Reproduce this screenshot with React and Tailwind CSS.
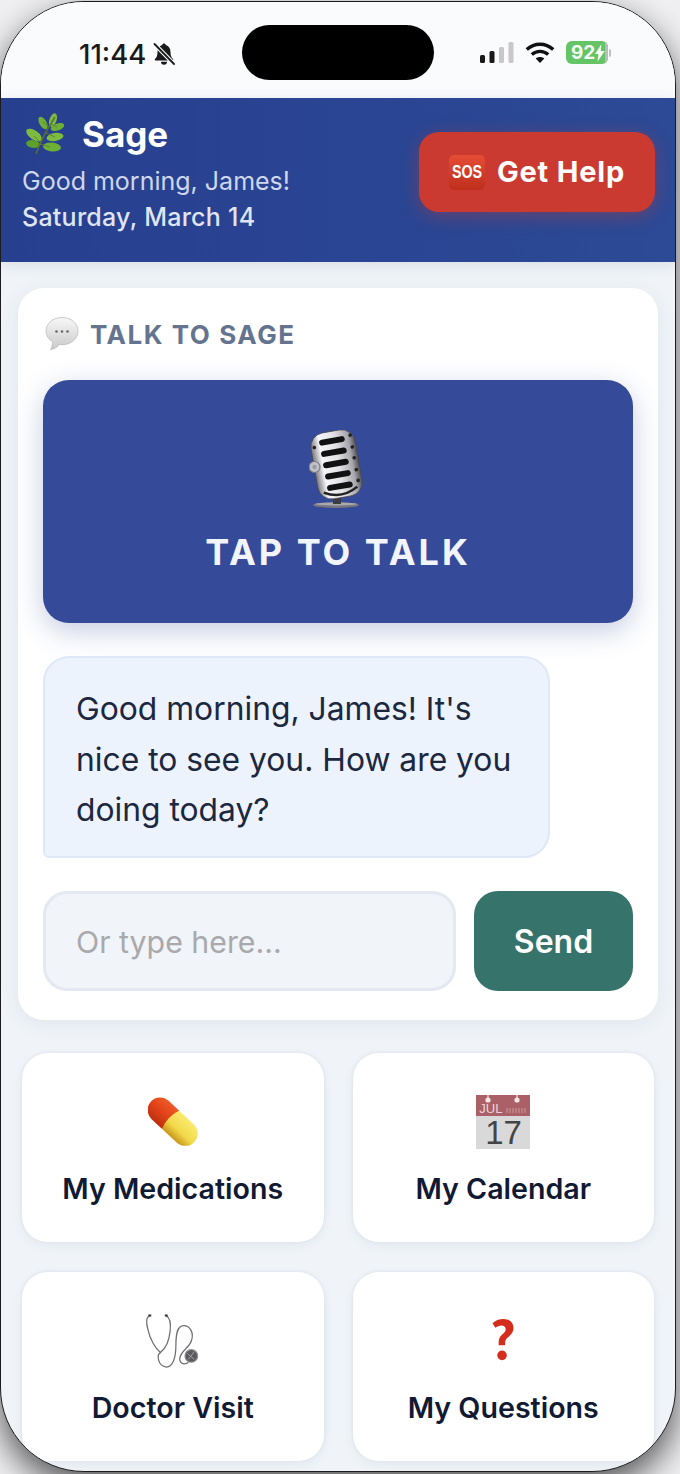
import React from 'react';

function BellSlash() {
  return (
    <svg width="24" height="24" viewBox="0 0 24 24" className="ml-[6px]">
      <path d="M12 1.500c-1 0-1.700.7-1.800 1.600C7.300 3.900 5.500 6.500 5.500 10c0 3.500-.8 5.300-2.500 7-.6.600-.2 1.500.6 1.500h16.800c.8 0 1.200-.9.6-1.500-1.700-1.700-2.500-3.500-2.500-7 0-3.500-1.800-6.100-4.700-6.900-.1-.9-.8-1.600-1.800-1.600z" fill="#1a1a1a" />
      <path d="M9 19.800a3 3 0 0 0 6 0z" fill="#1a1a1a" />
      <path d="M2.500 2 22 22" stroke="#fafbfd" strokeWidth="4" />
      <path d="M2.500 2 22 22" stroke="#1a1a1a" strokeWidth="1.800" strokeLinecap="round" />
    </svg>
  );
}

function Signal() {
  return (
    <svg width="34" height="22" viewBox="0 0 34 22">
      <rect x="0" y="13" width="5" height="8" rx="1.500" fill="#1a1a1a" />
      <rect x="9.500" y="9" width="5" height="12" rx="1.500" fill="#1a1a1a" />
      <rect x="19" y="5" width="5" height="16" rx="1.500" fill="#c8c8ca" />
      <rect x="28.500" y="0" width="5" height="21" rx="1.500" fill="#c8c8ca" />
    </svg>
  );
}

function Wifi() {
  return (
    <svg width="30" height="22" viewBox="0 0 30 22" fill="none" stroke="#111" strokeWidth="3.400">
      <path d="M1.800 7.500C9.500.5 20.500.5 28.200 7.500" />
      <path d="M6.800 12.500c4.800-4.200 11.600-4.200 16.400 0" />
      <path d="M15 21l-4.300-4.500c2.500-2 6.100-2 8.600 0z" fill="#111" stroke="none" />
    </svg>
  );
}

function Battery() {
  return (
    <div className="flex items-center">
      <div className="flex h-[23px] w-[42px] items-center overflow-hidden rounded-[6px] bg-[#65c466]">
        <span className="pl-[5px] text-[19px] leading-none font-bold text-[#f4fbf4]">92</span>
        <svg width="10" height="18" viewBox="0 0 10 18">
          <path d="M6.500 0 0 10h3.500L2.500 18 10 7H6z" fill="#f4fbf4" />
        </svg>
        <div className="ml-auto h-full w-[3px] bg-[#b9bdb9]" />
      </div>
      <div className="ml-[1px] h-[8px] w-[2px] rounded-r-sm bg-[#c0c0c2]" />
    </div>
  );
}

function Leaf() {
  const leaves = [
    [31, 7, -70, 7, 3.500, '#7cbb3f'],
    [35.500, 14, -20, 7, 3.500, '#6db035'],
    [21, 10, 60, 7, 3.500, '#6db035'],
    [33, 24, -10, 8.500, 4, '#7cbb3f'],
    [12, 22, 35, 9, 4.500, '#7cbb3f'],
    [30, 34, 5, 9, 4.500, '#6db035'],
    [11, 31, 8, 7, 3.800, '#5ea02c'],
  ];
  return (
    <svg width="42" height="42" viewBox="0 0 42 42">
      {leaves.map(([x, y, r, rx, ry, c], i) => (
        <ellipse key={i} cx={x} cy={y} rx={rx} ry={ry} fill={c} transform={`rotate(${r} ${x} ${y})`} />
      ))}
      <path d="M14 41C17 32 24 18 33 4" stroke="#5d6f33" strokeWidth="1.400" fill="none" />
      <path d="M19 30l-7-7M18 31l10 3M24 20l9 4M27 14l-6-5M29 11l6 3" stroke="#5d7d33" strokeWidth=".9" fill="none" />
    </svg>
  );
}

function Balloon() {
  return (
    <svg width="34" height="34" viewBox="0 0 34 34" className="ml-[2px]">
      <defs>
        <linearGradient id="balloon" x1="0" y1="0" x2="0" y2="1">
          <stop offset="0" stopColor="#f8f8f8" />
          <stop offset="1" stopColor="#c9c9c9" />
        </linearGradient>
      </defs>
      <path d="M17 .5C8 .5 1 6.500 1 14c0 4.500 2.600 8.400 6.500 10.800.2 2.300-.3 5.300-2 7.700 3.600-.4 7-2.500 9-5 .8.100 1.600.200 2.500.200 9 0 16-6 16-13.700S26 .5 17 .5z" fill="url(#balloon)" stroke="#bdbdbd" strokeWidth=".8" />
      <circle cx="11.500" cy="14.500" r="1.300" fill="#666" />
      <circle cx="17" cy="14.500" r="1.300" fill="#666" />
      <circle cx="22.500" cy="14.500" r="1.300" fill="#666" />
    </svg>
  );
}

function Mic() {
  return (
    <svg width="58" height="82" viewBox="0 0 58 82">
      <defs>
        <linearGradient id="chrome" x1="0" y1="0" x2="1" y2="0">
          <stop offset="0" stopColor="#77777d" />
          <stop offset=".2" stopColor="#f6f6f8" />
          <stop offset=".55" stopColor="#e2e2e6" />
          <stop offset=".85" stopColor="#a6a6ac" />
          <stop offset="1" stopColor="#4c4c52" />
        </linearGradient>
      </defs>
      <ellipse cx="27" cy="75" rx="23" ry="3" fill="#77777d" />
      <ellipse cx="27" cy="74" rx="21" ry="1.500" fill="#a9a9ae" />
      <rect x="24" y="66" width="8" height="8" fill="#3c3c42" />
      <g transform="rotate(-10 27 34)">
        <rect x="5" y="1" width="45" height="67" rx="14" fill="url(#chrome)" stroke="#4a4a50" strokeWidth=".8" />
        {[10.500, 22, 33.500, 45, 56.500].map((y) => (
          <rect key={y} x="14" y={y - 3} width="26" height="6" rx="3" fill="#111" />
        ))}
        {[8, 20, 31, 43, 54].map((y) => (
          <circle key={y} cx="46" cy={y} r="1.800" fill="#222" />
        ))}
        <circle cx="8.500" cy="14" r="1.800" fill="#222" />
        <path d="M10 60q17 10 34 0" stroke="#222" strokeWidth="2.500" fill="none" />
      </g>
      <circle cx="5.500" cy="37" r="5.500" fill="#c2c2c6" stroke="#77777d" strokeWidth="1.200" />
      <circle cx="5.500" cy="37" r="2.200" fill="#9a9aa0" />
    </svg>
  );
}

function Pill() {
  return (
    <svg width="50" height="50" viewBox="0 0 54 54">
      <defs>
        <linearGradient id="redcap" x1="0" y1="0" x2="0" y2="1">
          <stop offset="0" stopColor="#ee5a26" />
          <stop offset=".5" stopColor="#e2431a" />
          <stop offset="1" stopColor="#bf2f0d" />
        </linearGradient>
        <linearGradient id="yellowcap" x1="0" y1="0" x2="0" y2="1">
          <stop offset="0" stopColor="#f9ea70" />
          <stop offset=".6" stopColor="#f2d94a" />
          <stop offset="1" stopColor="#c9961a" />
        </linearGradient>
      </defs>
      <g transform="rotate(43 27 27)">
        <path d="M25 13.500H9.500a13.500 13.500 0 0 0 0 27H25z" fill="url(#redcap)" transform="translate(-1.500 0)" />
        <path d="M23.500 13.500H45a13.500 13.500 0 0 1 0 27H23.500c-3.500-8.500-3.500-18.500 0-27z" fill="url(#yellowcap)" />
      </g>
    </svg>
  );
}

function CalendarIcon() {
  return (
    <div className="flex h-[54px] w-[54px] flex-col bg-[#d9d9d9] font-['Liberation_Sans',sans-serif]">
      <div className="relative flex h-[21px] items-end overflow-hidden bg-[#ab6068] pl-[3px] text-[13px] leading-[15px] text-[#e9d5d7]">
        JUL
        <svg width="54" height="21" viewBox="0 0 54 21" className="absolute top-0 left-0">
          <circle cx="12" cy="5" r="2.600" fill="#f2e6e6" />
          <circle cx="41" cy="5" r="2.600" fill="#f2e6e6" />
          <path d="M12 0v4M41 0v4" stroke="#f2e6e6" strokeWidth="1.200" />
          <path d="M31 18v-5M34 18v-5M37 18v-5M40 18v-5M43 18v-5M46 18v-5M49 18v-5" stroke="#c99aa0" strokeWidth="1" />
        </svg>
      </div>
      <div className="h-[33px] pl-[9px] text-[33px] leading-[33px] text-[#444]">17</div>
    </div>
  );
}

function Stethoscope() {
  return (
    <svg width="55" height="55" viewBox="0 0 55 57" fill="none" stroke="#6f6f73" strokeWidth="1.300">
      <path d="M4 2C0 3 0 9 2 16c2 10 8 20 13 24 5-4 9-12 10-22 1-8 0-14-4-16" />
      <path d="M15 40c-4 2-3 14 6 15 7 0 10-10 10-22 0-11 1-21 8-21 7 0 11 8 8 16-2 7-11 10-12 18 0 6 6 7 9 4" />
      <circle cx="47" cy="43.500" r="6.500" fill="#5a5a5e" stroke="#8a8a8e" />
      <path d="M43 41l7 6M50 39l-6 8" stroke="#a5a5a8" strokeWidth="1" />
      <path d="M2.500 1.500h3M19.500 1.500h3" stroke="#333" strokeWidth="2" />
    </svg>
  );
}

function Question() {
  return (
    <svg width="24" height="44" viewBox="0 0 24 46">
      <path d="M1 4.500C4 1.500 8 0 12.500 0 19 0 23 4 23 9.500c0 4-2 6.500-5 9-3 2.300-3.800 3.800-3.800 7.500v1.500H7.500v-2.500c0-4.800 1.500-7 4.300-9.300 2-1.700 3-3 3-5 0-2.500-1.700-4-4.500-4-2.300 0-4.500 1-6.300 2.500z" fill="#d42d1e" />
      <circle cx="11" cy="38" r="5" fill="#d42d1e" />
    </svg>
  );
}

function MenuCard({ icon, label }) {
  return (
    <div className="flex h-[189px] flex-col items-center rounded-[26px] bg-white shadow-[0_0_3px_1px_#e1e6f0,0_4px_12px_rgba(40,60,110,0.06)]">
      <div className="mt-[29px] flex h-[80px] items-center justify-center">{icon}</div>
      <div className="mt-[7px] text-[28.600px] leading-[40px] font-semibold text-[#111a33]">{label}</div>
    </div>
  );
}

export default function App() {
  return (
    <div className="h-[1474px] w-[680px] overflow-hidden bg-[#f0f0f3] pt-[1px] pr-[4px] font-['Inter',sans-serif]">
      <div className="h-[1471px] overflow-hidden rounded-[84px] border border-[#1c1c1e] bg-[#f0f4f8] shadow-[0_14px_34px_rgba(0,0,0,0.65)]">
        <div className="flex h-[96px] items-start bg-[#fafbfd] pl-[78px]">
          <div className="mt-[34px] flex w-[163px] items-center text-[27.500px] leading-[36px] font-medium text-[#1a1a1a]">
            11:44
            <BellSlash />
          </div>
          <div className="mt-[23px] h-[55px] w-[192px] rounded-full bg-black" />
          <div className="mt-[39px] ml-[46px] flex items-center gap-[11px]">
            <Signal />
            <Wifi />
            <Battery />
          </div>
        </div>

        <header className="flex h-[164px] items-start justify-between bg-gradient-to-r from-[#273f8f] to-[#2c4a96] pt-[15px] pr-[20px] pl-[21px] shadow-[0_3px_14px_rgba(40,60,110,0.12)]">
          <div>
            <div className="flex items-center gap-[18px] text-[35px] leading-[42px] font-bold text-white">
              <Leaf />
              Sage
            </div>
            <div className="mt-[8px] text-[25px] leading-[36px] text-[#ced7ec]">Good morning, James!</div>
            <div className="text-[25px] leading-[36px] font-medium tracking-[0.25px] text-[#dfe5f3]">Saturday, March 14</div>
          </div>
          <button className="mt-[19px] flex h-[80px] w-[236px] items-center justify-center gap-[12px] rounded-[20px] bg-[#cb3a30] text-[29px] font-bold tracking-[0.8px] text-white shadow-[0_4px_18px_rgba(203,58,48,0.4)]">
            <span className="flex h-[35px] w-[36px] items-center justify-center rounded-[5px] bg-gradient-to-b from-[#e64c35] to-[#bd2f1d] font-['Liberation_Sans',sans-serif] text-[19px] font-bold tracking-normal">
              <span className="inline-block scale-x-75">SOS</span>
            </span>
            Get Help
          </button>
        </header>

        <main className="px-[17px] pt-[26px]">
          <section className="flex h-[732px] flex-col rounded-[26px] bg-white px-[25px] pt-[28px] shadow-[0_4px_20px_rgba(40,60,110,0.08)]">
            <div className="flex h-[36px] items-center gap-[11px] text-[26px] font-bold tracking-[1.550px] text-[#64748f]">
              <Balloon />
              TALK TO SAGE
            </div>
            <button className="mt-[28px] flex h-[243px] flex-col items-center rounded-[26px] bg-[#354a99] pt-[50px] text-[36px] leading-[44px] font-bold tracking-[3px] text-[#f2f4fb] shadow-[0_8px_28px_rgba(53,74,153,0.28)]">
              <Mic />
              <span className="mt-[18px]">TAP TO TALK</span>
            </button>
            <div className="mt-[33px] h-[202px] w-[507px] rounded-[26px] rounded-bl-[6px] border-2 border-[#dfe8f8] bg-[#edf3fd] px-[31px] py-[26px] text-[31.800px] leading-[50.500px] text-[#1c2740]">
              Good morning, James! It's nice to see you. How are you doing today?
            </div>
            <div className="mt-[33px] flex gap-[18px]">
              <div className="flex h-[100px] flex-1 items-center rounded-[24px] border-[3px] border-[#e3e8f1] bg-[#f1f4f8] px-[30px] pt-[3px] text-[30.300px] text-[#a9a9ac]">
                Or type here...
              </div>
              <button className="h-[100px] w-[159px] rounded-[24px] bg-[#36746b] pt-[2px] text-[32px] font-semibold text-white">Send</button>
            </div>
          </section>

          <div className="mt-[33px] grid grid-cols-2 gap-x-[29px] gap-y-[30px] px-[4px]">
            <MenuCard icon={<Pill />} label="My Medications" />
            <MenuCard icon={<CalendarIcon />} label="My Calendar" />
            <MenuCard icon={<Stethoscope />} label="Doctor Visit" />
            <MenuCard icon={<Question />} label="My Questions" />
          </div>
        </main>
      </div>
    </div>
  );
}
